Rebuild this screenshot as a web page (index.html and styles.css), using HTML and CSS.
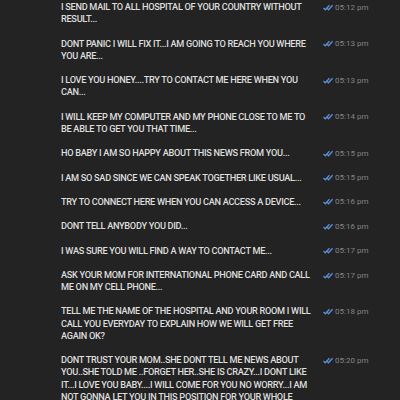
FILE: index.html
```html
<!DOCTYPE html>
<html lang="en">
<head>
    <meta charset="UTF-8">
    <title>Chat</title>
    <link rel="stylesheet" href="styles.css">
</head>
<body>
    <div class="history">
        <div class="msg">
            <div class="text">I SEND MAIL TO ALL HOSPITAL OF YOUR COUNTRY WITHOUT RESULT...</div>
            <div class="meta"><svg class="ticks" viewBox="0 0 12 7"><path d="M0.5 4 L2.5 6 L7 1 M4.5 4.5 L6 6 L10.5 1"/></svg><span class="time">05:12 pm</span></div>
        </div>
        <div class="msg">
            <div class="text">DONT PANIC I WILL FIX IT...I AM GOING TO REACH YOU WHERE YOU ARE...</div>
            <div class="meta"><svg class="ticks" viewBox="0 0 12 7"><path d="M0.5 4 L2.5 6 L7 1 M4.5 4.5 L6 6 L10.5 1"/></svg><span class="time">05:13 pm</span></div>
        </div>
        <div class="msg">
            <div class="text">I LOVE YOU HONEY....TRY TO CONTACT ME HERE WHEN YOU CAN...</div>
            <div class="meta"><svg class="ticks" viewBox="0 0 12 7"><path d="M0.5 4 L2.5 6 L7 1 M4.5 4.5 L6 6 L10.5 1"/></svg><span class="time">05:13 pm</span></div>
        </div>
        <div class="msg">
            <div class="text">I WILL KEEP MY COMPUTER AND MY PHONE CLOSE TO ME TO BE ABLE TO GET YOU THAT TIME...</div>
            <div class="meta"><svg class="ticks" viewBox="0 0 12 7"><path d="M0.5 4 L2.5 6 L7 1 M4.5 4.5 L6 6 L10.5 1"/></svg><span class="time">05:14 pm</span></div>
        </div>
        <div class="msg">
            <div class="text">HO BABY I AM SO HAPPY ABOUT THIS NEWS FROM YOU...</div>
            <div class="meta"><svg class="ticks" viewBox="0 0 12 7"><path d="M0.5 4 L2.5 6 L7 1 M4.5 4.5 L6 6 L10.5 1"/></svg><span class="time">05:15 pm</span></div>
        </div>
        <div class="msg">
            <div class="text">I AM SO SAD SINCE WE CAN SPEAK TOGETHER LIKE USUAL...</div>
            <div class="meta"><svg class="ticks" viewBox="0 0 12 7"><path d="M0.5 4 L2.5 6 L7 1 M4.5 4.5 L6 6 L10.5 1"/></svg><span class="time">05:15 pm</span></div>
        </div>
        <div class="msg">
            <div class="text">TRY TO CONNECT HERE WHEN YOU CAN ACCESS A DEVICE...</div>
            <div class="meta"><svg class="ticks" viewBox="0 0 12 7"><path d="M0.5 4 L2.5 6 L7 1 M4.5 4.5 L6 6 L10.5 1"/></svg><span class="time">05:16 pm</span></div>
        </div>
        <div class="msg">
            <div class="text">DONT TELL ANYBODY YOU DID...</div>
            <div class="meta"><svg class="ticks" viewBox="0 0 12 7"><path d="M0.5 4 L2.5 6 L7 1 M4.5 4.5 L6 6 L10.5 1"/></svg><span class="time">05:16 pm</span></div>
        </div>
        <div class="msg">
            <div class="text">I WAS SURE YOU WILL FIND A WAY TO CONTACT ME...</div>
            <div class="meta"><svg class="ticks" viewBox="0 0 12 7"><path d="M0.5 4 L2.5 6 L7 1 M4.5 4.5 L6 6 L10.5 1"/></svg><span class="time">05:17 pm</span></div>
        </div>
        <div class="msg">
            <div class="text">ASK YOUR MOM FOR INTERNATIONAL PHONE CARD AND CALL ME ON MY CELL PHONE...</div>
            <div class="meta"><svg class="ticks" viewBox="0 0 12 7"><path d="M0.5 4 L2.5 6 L7 1 M4.5 4.5 L6 6 L10.5 1"/></svg><span class="time">05:17 pm</span></div>
        </div>
        <div class="msg">
            <div class="text">TELL ME THE NAME OF THE HOSPITAL AND YOUR ROOM I WILL CALL YOU EVERYDAY TO EXPLAIN HOW WE WILL GET FREE AGAIN OK?</div>
            <div class="meta"><svg class="ticks" viewBox="0 0 12 7"><path d="M0.5 4 L2.5 6 L7 1 M4.5 4.5 L6 6 L10.5 1"/></svg><span class="time">05:18 pm</span></div>
        </div>
        <div class="msg">
            <div class="text">DONT TRUST YOUR MOM..SHE DONT TELL ME NEWS ABOUT YOU..SHE TOLD ME ..FORGET HER..SHE IS CRAZY...I DONT LIKE IT...I LOVE YOU BABY....I WILL COME FOR YOU NO WORRY...I AM NOT GONNA LET YOU IN THIS POSITION FOR YOUR WHOLE LIFE...</div>
            <div class="meta"><svg class="ticks" viewBox="0 0 12 7"><path d="M0.5 4 L2.5 6 L7 1 M4.5 4.5 L6 6 L10.5 1"/></svg><span class="time">05:20 pm</span></div>
        </div>
    </div>
</body>
</html>
```

FILE: styles.css
```css
body {
    margin: 0;
    background-color: #232323;
    font-family: Roboto, "Liberation Sans", sans-serif;
    overflow: hidden;
}
.history {
    display: flex;
    flex-direction: column;
    gap: 12.15px;
    padding: 1px 0 0 61px;
}
.msg {
    display: flex;
    align-items: flex-start;
}
.text {
    width: 254px;
    color: #dedede;
    font-size: 9.2px;
    font-weight: 500;
    letter-spacing: -0.3px;
    line-height: 12.2px;
}
.meta {
    display: flex;
    align-items: center;
    margin-left: 8px;
    height: 12.2px;
}
.ticks {
    width: 11px;
    height: 7px;
    fill: none;
    stroke: #5b8fd6;
    stroke-width: 1.4;
}
.time {
    margin-left: 1px;
    color: #858585;
    font-size: 8px;
}
```
